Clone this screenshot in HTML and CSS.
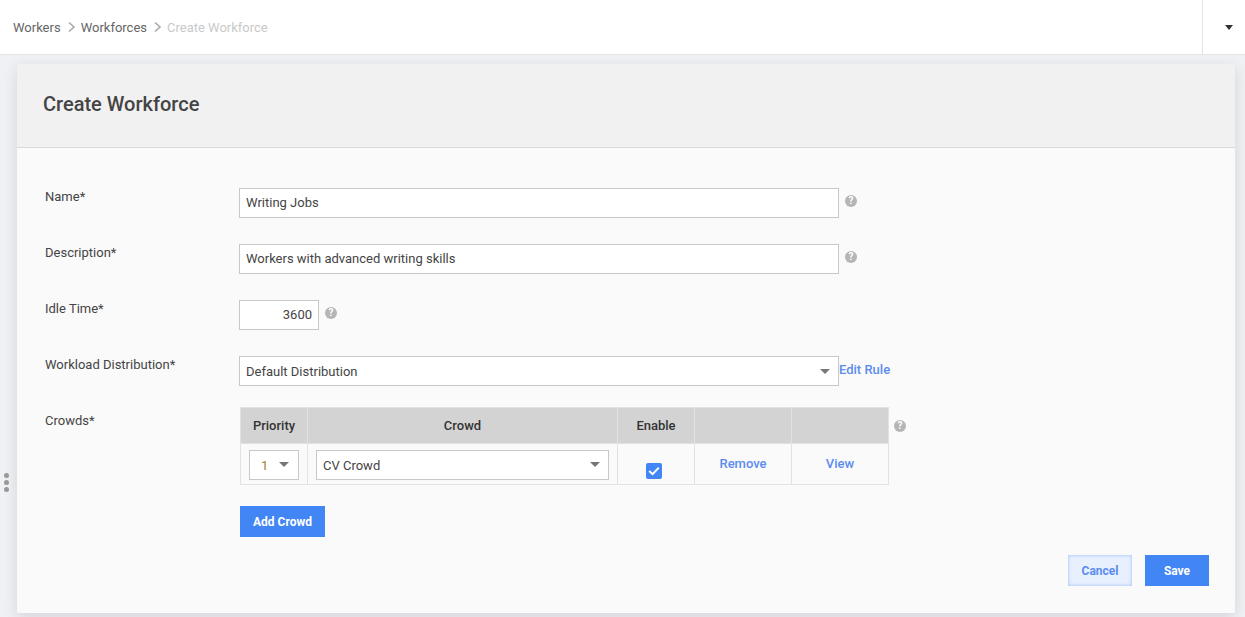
FILE: index.html
```html
<!DOCTYPE html>
<html>
<head>
  <meta charset="UTF-8">
  <title>Create Workforce</title>
  <link rel="stylesheet" href="styles.css">
</head>
<body>
  <div class="topbar">
    <div class="breadcrumb">
      <a class="crumb">Workers</a>
      <svg class="crumb-sep" width="10" height="12" viewBox="0 0 10 12"><path d="M2 1.5 L7 6 L2 10.5" fill="none" stroke="#aaa" stroke-width="1.6"/></svg>
      <a class="crumb">Workforces</a>
      <svg class="crumb-sep" width="10" height="12" viewBox="0 0 10 12"><path d="M2 1.5 L7 6 L2 10.5" fill="none" stroke="#aaa" stroke-width="1.6"/></svg>
      <span class="crumb current">Create Workforce</span>
    </div>
    <div class="user-menu"><span class="caret dark"></span></div>
  </div>

  <div class="drag-handle"><i></i><i></i><i></i></div>

  <div class="page">
    <div class="card">
      <div class="card-head">
        <h1>Create Workforce</h1>
      </div>
      <div class="card-body">
        <div class="form-row">
          <label>Name*</label>
          <input class="text-input wide" type="text" value="Writing Jobs">
          <span class="help">?</span>
        </div>
        <div class="form-row">
          <label>Description*</label>
          <input class="text-input wide" type="text" value="Workers with advanced writing skills">
          <span class="help">?</span>
        </div>
        <div class="form-row">
          <label>Idle Time*</label>
          <input class="text-input number" type="text" value="3600">
          <span class="help">?</span>
        </div>
        <div class="form-row">
          <label>Workload Distribution*</label>
          <div class="select wide"><span>Default Distribution</span><span class="caret"></span></div>
          <a class="link edit-rule">Edit Rule</a>
        </div>
        <div class="form-row crowds-row">
          <label>Crowds*</label>
          <div class="crowds">
            <div class="crowds-top">
              <table class="crowd-table">
                <thead>
                  <tr>
                    <th class="col-priority">Priority</th>
                    <th class="col-crowd">Crowd</th>
                    <th class="col-enable">Enable</th>
                    <th class="col-action"></th>
                    <th class="col-action"></th>
                  </tr>
                </thead>
                <tbody>
                  <tr>
                    <td>
                      <div class="select small"><span class="select-val priority-val">1</span><span class="caret"></span></div>
                    </td>
                    <td>
                      <div class="select"><span class="select-val">CV Crowd</span><span class="caret"></span></div>
                    </td>
                    <td>
                      <span class="checkbox">
                        <svg width="12" height="10" viewBox="0 0 12 10"><path d="M1.2 5 L4.6 8.2 L10.8 1.6" fill="none" stroke="#fff" stroke-width="2"/></svg>
                      </span>
                    </td>
                    <td><a class="link">Remove</a></td>
                    <td><a class="link">View</a></td>
                  </tr>
                </tbody>
              </table>
              <span class="help">?</span>
            </div>
            <button class="btn primary add-crowd">Add Crowd</button>
          </div>
        </div>
        <div class="form-actions">
          <button class="btn secondary">Cancel</button>
          <button class="btn primary">Save</button>
        </div>
      </div>
    </div>
  </div>
</body>
</html>
```

FILE: styles.css
```css
* {
  box-sizing: border-box;
}

html, body {
  height: 617px;
  overflow: hidden;
}

body {
  margin: 0;
  font-family: Roboto, 'Liberation Sans', sans-serif;
  font-size: 13px;
  color: #444;
  background-color: #F0F1F5;
}

/* top bar */
.topbar {
  height: 55px;
  background-color: #fff;
  border-bottom: 1px solid #E4E4E4;
  display: flex;
  justify-content: space-between;
}

.breadcrumb {
  display: flex;
  align-items: center;
  padding-left: 13px;
}

.crumb {
  color: #666;
}

.crumb.current {
  color: #C9C9C9;
}

.crumb-sep {
  margin: 0 4px 0 6px;
}

.user-menu {
  width: 43px;
  border-left: 1px solid #E4E4E4;
  display: flex;
  align-items: center;
  justify-content: center;
  padding-left: 10px;
}

.caret {
  width: 0;
  height: 0;
  border-left: 5px solid transparent;
  border-right: 5px solid transparent;
  border-top: 5px solid #777;
}

.caret.dark {
  border-left-width: 4.5px;
  border-right-width: 4.5px;
  border-top: 5px solid #333;
}

/* little handle on the left edge */
.drag-handle {
  position: absolute;
  left: 3.5px;
  top: 473px;
  display: flex;
  flex-direction: column;
  gap: 2px;
}

.drag-handle i {
  display: block;
  width: 5px;
  height: 5px;
  border-radius: 50%;
  background-color: #999;
}

/* card */
.page {
  padding: 9px 10px 0 17px;
}

.card {
  height: 549px;
  background-color: #FAFAFA;
  box-shadow: 0 4px 14px rgba(0, 0, 0, 0.12);
}

.card-head {
  height: 84px;
  background-color: #F1F1F2;
  border-bottom: 1px solid #DADADA;
  padding: 0 26px;
  display: flex;
  align-items: center;
}

h1 {
  margin: 0 0 4px;
  font-size: 20px;
  font-weight: 500;
  color: #444;
}

.card-body {
  padding: 40px 26px 0 28px;
}

.form-row {
  display: flex;
  align-items: flex-start;
  height: 56px;
}

.form-row label {
  width: 194px;
  flex-shrink: 0;
  padding-top: 1px;
  color: #444;
}

.text-input,
.select {
  height: 30px;
  border: 1px solid #C8C8C8;
  background-color: #fff;
  font-family: inherit;
  font-size: 13px;
  color: #444;
  padding: 0 6px;
}

.text-input {
  padding-bottom: 2px;
}

.wide {
  width: 600px;
}

.number {
  width: 80px;
  text-align: right;
}

.select {
  display: flex;
  align-items: center;
  justify-content: space-between;
  padding-right: 8px;
}

.select.small {
  width: 50px;
  padding: 0 9px 0 11px;
}

.select-val {
  margin-top: 2px;
}

.priority-val {
  color: #A87B2C;
}

.help {
  width: 12px;
  height: 12px;
  border-radius: 50%;
  background-color: #B5B5B5;
  color: #fff;
  font-size: 10px;
  font-weight: 700;
  line-height: 12px;
  text-align: center;
  margin: 7px 0 0 6px;
}

.link {
  color: #5B8DEF;
  font-weight: 500;
}

.edit-rule {
  margin-top: 6px;
}

/* crowds table */
.crowds-row {
  height: auto;
}

.crowds {
  margin-left: 1px;
}

.crowds-top {
  display: flex;
  align-items: flex-start;
  margin-top: -5px;
}

.crowds-top .help {
  margin: 13px 0 0 5px;
}

.crowd-table {
  border-collapse: collapse;
  table-layout: fixed;
  width: 649px;
}

.crowd-table th,
.crowd-table td {
  border: 1px solid #E2E2E2;
  text-align: center;
  padding: 0;
}

.crowd-table th {
  height: 36px;
  background-color: #D3D3D3;
  font-weight: 500;
  color: #333;
}

.crowd-table td {
  height: 41px;
  padding-bottom: 2px;
}

.crowd-table td .select {
  margin: 3px 8px 0;
  text-align: left;
}

.col-priority {
  width: 67px;
}

.col-crowd {
  width: 310px;
}

.col-enable {
  width: 77px;
}

.col-action {
  width: 97px;
}

.checkbox {
  display: inline-flex;
  align-items: center;
  justify-content: center;
  width: 16px;
  height: 16px;
  margin: 15px 0 0 -4px;
  border-radius: 2px;
  background-color: #4285F4;
  vertical-align: middle;
}

/* buttons */
.btn {
  height: 31px;
  border: none;
  font-family: inherit;
  font-size: 12px;
  font-weight: 700;
}

.btn.primary {
  background-color: #4285F4;
  color: #fff;
}

.btn.secondary {
  background-color: #E8F0FE;
  color: #5B8DEF;
  box-shadow: inset 0 0 3px 1px #B5CFFA;
}

.add-crowd {
  width: 85px;
  margin-top: 21px;
  display: block;
}

.form-actions {
  display: flex;
  justify-content: flex-end;
  gap: 13px;
  margin-top: 18px;
}

.form-actions .btn {
  width: 64px;
}
```
